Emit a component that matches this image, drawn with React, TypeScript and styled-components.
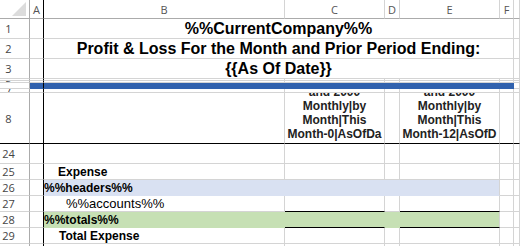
import React from "react";
import styled, { createGlobalStyle } from "styled-components";

const GRID = "#d4d4d4";
const HEAD_LINE = "#ababab";
const FREEZE = "#000000";
const BLUE_BAR = "#3162ae";
const BLUE_FILL = "#d9e1f2";
const GREEN_FILL = "#c6e0b4";

const Global = createGlobalStyle`
  html, body { margin: 0; padding: 0; background: #fff; width: 520px; height: 246px; overflow: hidden; }
  #root { width: 520px; height: 246px; }
`;

const Sheet = styled.div`
  display: grid;
  grid-template-columns: 30px 14px 241px 100px 15px 100px 14px 6px;
  grid-template-rows: 19px 20px 20px 20px 2px 2px 6px 4px 51px 20px 16px 16px 16px 16px 16px 3px;
  width: 520px;
  height: 246px;
  overflow: hidden;
  background: #fff;
  font-family: "Liberation Sans", Arial, sans-serif;
`;

const Corner = styled.div`
  display: flex;
  align-items: flex-end;
  justify-content: flex-end;
  padding: 0 3px 2px 0;
  border-right: 1px solid ${HEAD_LINE};
  border-bottom: 1px solid ${HEAD_LINE};
`;

const CornerMark = styled.div`
  width: 14px;
  height: 14px;
  background: #dcdcdc;
  clip-path: polygon(100% 0, 100% 100%, 0 100%);
`;

const ColHead = styled.div<{ $freeze?: boolean }>`
  display: flex;
  align-items: center;
  justify-content: center;
  overflow: hidden;
  border-right: 1px solid ${(p) => (p.$freeze ? FREEZE : GRID)};
  border-bottom: 1px solid ${HEAD_LINE};
  font: 11px/1 "Open Sans", "Liberation Sans", sans-serif;
  color: #555;
`;

const RowHead = styled.div<{ $bottom?: string }>`
  display: flex;
  align-items: center;
  justify-content: center;
  padding-right: 12px;
  overflow: hidden;
  border-right: 1px solid ${HEAD_LINE};
  border-bottom: 1px solid ${(p) => p.$bottom ?? GRID};
  font: 11px/1 "Open Sans", "Liberation Sans", sans-serif;
  color: #444;
`;

const Cell = styled.div<{ $bg?: string; $right?: string; $bottom?: string; $span?: number }>`
  grid-column: span ${(p) => p.$span ?? 1};
  display: flex;
  align-items: flex-end;
  min-width: 0;
  overflow: hidden;
  background: ${(p) => p.$bg ?? "#fff"};
  border-right: 1px solid ${(p) => p.$right ?? p.$bg ?? GRID};
  border-bottom: 1px solid ${(p) => p.$bottom ?? p.$bg ?? GRID};
`;

const Title = styled.span`
  flex: 1;
  text-align: center;
  padding-bottom: 1px;
  white-space: nowrap;
  font: bold 16px/16px "Liberation Sans", Arial, sans-serif;
  color: #000;
`;

const Label = styled.span<{ $indent: number; $bold?: boolean; $size?: number }>`
  padding-left: ${(p) => p.$indent}px;
  white-space: nowrap;
  font-family: "Liberation Sans", Arial, sans-serif;
  font-weight: ${(p) => (p.$bold ? 700 : 400)};
  font-size: ${(p) => p.$size ?? 12}px;
  line-height: 14px;
  color: #000;
`;

const HeadText = styled.div`
  flex: 1;
  min-width: 0;
  display: flex;
  flex-direction: column;
  align-items: center;
  padding-bottom: 2px;
  white-space: nowrap;
  font: bold 12px/14px "Liberation Sans", Arial, sans-serif;
  color: #222;
`;

const letters = ["A", "B", "C", "D", "E", "F", "G"];

type Over = { bg?: string; right?: string; bottom?: string };

/* A plain row: row header + cells A..G, with per-column overrides */
function PlainRow({ n, over = {}, rowBottom }: { n?: number; over?: Record<number, Over>; rowBottom?: string }) {
  return (
    <>
      <RowHead $bottom={rowBottom}>{n}</RowHead>
      {letters.map((l, i) => {
        const o = over[i] ?? {};
        return (
          <Cell
            key={l}
            $bg={o.bg}
            $right={o.right ?? (i === 0 ? FREEZE : undefined)}
            $bottom={o.bottom ?? rowBottom}
          />
        );
      })}
    </>
  );
}

function TitleRow({ n, text }: { n: number; text: string }) {
  return (
    <>
      <RowHead>{n}</RowHead>
      <Cell $right={FREEZE} />
      <Cell $span={5}>
        <Title>{text}</Title>
      </Cell>
      <Cell />
    </>
  );
}

function HeadCol({ lines }: { lines: string[] }) {
  return (
    <Cell $bottom={FREEZE}>
      <HeadText>
        {lines.map((t, i) => (
          <span key={i}>{t}</span>
        ))}
      </HeadText>
    </Cell>
  );
}

export default function App() {
  return (
    <>
      <Global />
      <Sheet>
        {/* column headers */}
        <Corner>
          <CornerMark />
        </Corner>
        {letters.map((l, i) => (
          <ColHead key={l} $freeze={i === 0}>
            {l === "G" ? "" : l}
          </ColHead>
        ))}

        <TitleRow n={1} text="%%CurrentCompany%%" />
        <TitleRow n={2} text="Profit & Loss For the Month and Prior Period Ending:" />
        <TitleRow n={3} text="{{As Of Date}}" />

        <PlainRow />
        <PlainRow n={5} />
        <PlainRow
          over={{
            0: { bg: BLUE_BAR, right: FREEZE },
            1: { bg: BLUE_BAR },
            2: { bg: BLUE_BAR },
            3: { bg: BLUE_BAR },
            4: { bg: BLUE_BAR },
            5: { bg: BLUE_BAR },
          }}
        />
        <PlainRow n={7} />

        {/* row 8: column headings */}
        <RowHead $bottom={FREEZE}>8</RowHead>
        <Cell $right={FREEZE} $bottom={FREEZE} />
        <Cell $bottom={FREEZE} />
        <HeadCol lines={["and 2000", "Monthly|by", "Month|This", "Month-0|AsOfDa"]} />
        <Cell $bottom={FREEZE} />
        <HeadCol lines={["and 2000", "Monthly|by", "Month|This", "Month-12|AsOfD"]} />
        <Cell $bottom={FREEZE} />
        <Cell $bottom={FREEZE} />

        <PlainRow n={24} />

        {/* 25 */}
        <RowHead>25</RowHead>
        <Cell $right={FREEZE} />
        <Cell>
          <Label $indent={14} $bold>
            Expense
          </Label>
        </Cell>
        <Cell />
        <Cell />
        <Cell />
        <Cell />
        <Cell />

        {/* 26 */}
        <RowHead>26</RowHead>
        <Cell $right={FREEZE} />
        <Cell $bg={BLUE_FILL}>
          <Label $indent={0} $bold>
            %%headers%%
          </Label>
        </Cell>
        <Cell $bg={BLUE_FILL} />
        <Cell $bg={BLUE_FILL} />
        <Cell $bg={BLUE_FILL} $right={GRID} />
        <Cell />
        <Cell />

        {/* 27 */}
        <RowHead>27</RowHead>
        <Cell $right={FREEZE} />
        <Cell>
          <Label $indent={22} $size={13}>
            %%accounts%%
          </Label>
        </Cell>
        <Cell $bottom={FREEZE} />
        <Cell />
        <Cell $bottom={FREEZE} />
        <Cell />
        <Cell />

        {/* 28 */}
        <RowHead>28</RowHead>
        <Cell $right={FREEZE} />
        <Cell $bg={GREEN_FILL}>
          <Label $indent={0} $bold>
            %%totals%%
          </Label>
        </Cell>
        <Cell $bg={GREEN_FILL} $bottom={FREEZE} />
        <Cell $bg={GREEN_FILL} />
        <Cell $bg={GREEN_FILL} $right={GRID} $bottom={FREEZE} />
        <Cell />
        <Cell />

        {/* 29 */}
        <RowHead>29</RowHead>
        <Cell $right={FREEZE} />
        <Cell>
          <Label $indent={15} $bold>
            Total Expense
          </Label>
        </Cell>
        <Cell />
        <Cell />
        <Cell />
        <Cell />
        <Cell />

        <PlainRow />
      </Sheet>
    </>
  );
}
